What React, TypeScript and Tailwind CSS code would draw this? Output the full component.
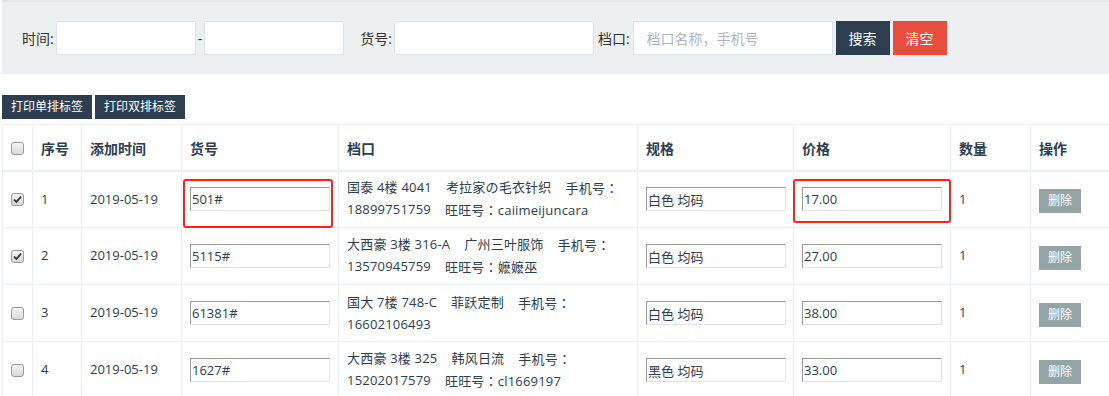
import React from 'react';

interface Row {
    id: number;
    date: string;
    sku: string;
    line1: string[];
    line2: string[];
    spec: string;
    price: string;
    qty: number;
    checked: boolean;
}

const rows: Row[] = [
    { id: 1, date: '2019-05-19', sku: '501#', line1: ['国泰 4楼 4041', '考拉家の毛衣针织', '手机号：'], line2: ['18899751759', '旺旺号：caiimeijuncara'], spec: '白色 均码', price: '17.00', qty: 1, checked: true },
    { id: 2, date: '2019-05-19', sku: '5115#', line1: ['大西豪 3楼 316-A', '广州三叶服饰', '手机号：'], line2: ['13570945759', '旺旺号：嬷嬷巫'], spec: '白色 均码', price: '27.00', qty: 1, checked: true },
    { id: 3, date: '2019-05-19', sku: '61381#', line1: ['国大 7楼 748-C', '菲跃定制', '手机号：'], line2: ['16602106493'], spec: '白色 均码', price: '38.00', qty: 1, checked: false },
    { id: 4, date: '2019-05-19', sku: '1627#', line1: ['大西豪 3楼 325', '韩风日流', '手机号：'], line2: ['15202017579', '旺旺号：cl1669197'], spec: '黑色 均码', price: '33.00', qty: 1, checked: false },
];

// full-width colon centred like the original font does
function Seg({ text }: { text: string }) {
    const parts = text.split('：');
    return (
        <span>
            {parts.map((p, i) => (
                <React.Fragment key={i}>
                    {p}
                    {i < parts.length - 1 && <span className="font-['Noto_Sans_CJK_JP']">：</span>}
                </React.Fragment>
            ))}
        </span>
    );
}

function Line({ segs }: { segs: string[] }) {
    return (
        <div className="flex gap-[14px] whitespace-nowrap tracking-[0.2px]">
            {segs.map((s, i) => <Seg key={i} text={s} />)}
        </div>
    );
}

function Check({ checked }: { checked: boolean }) {
    return (
        <span className="flex items-center justify-center w-[13px] h-[13px] rounded-[3px] border border-[#9a9a9a] bg-gradient-to-b from-[#f4f4f4] to-[#d9d9d9]">
            {checked && (
                <svg width="9" height="9" viewBox="0 0 9 9">
                    <path d="M1 4.6 L3.4 7 L8 1.6" fill="none" stroke="#333" strokeWidth="1.8" />
                </svg>
            )}
        </span>
    );
}

function CellInput({ value }: { value: string }) {
    return (
        <input
            readOnly
            defaultValue={value}
            className="block w-[140px] h-[24px] px-px text-[13px] text-[#2c3e50] bg-white border border-t-[#999] border-l-[#999] border-b-[#e3e3e3] border-r-[#e3e3e3] outline-none"
        />
    );
}

export default function App() {
    const th = 'border border-[#ecf0f1] border-b-2 px-2 pt-[2px] text-left align-middle font-bold text-[14px]';
    const td = 'border border-[#ecf0f1] px-2 align-middle';

    return (
        <div className="w-[1109px] h-[396px] overflow-hidden bg-white pl-[2px] font-['Open_Sans','Noto_Sans_CJK_SC',sans-serif] text-[#2c3e50]">
            {/* Search bar */}
            <div className="flex items-center h-[74px] pl-[20px] bg-[#ecf0f1] border-t-2 border-[#e2e6e8] text-[14px] text-[#333]">
                <span>时间:</span>
                <input readOnly className="ml-[2px] w-[140px] h-[34px] bg-white border border-[#dce4ec] outline-none" />
                <span className="mx-[2px]">-</span>
                <input readOnly className="w-[140px] h-[34px] bg-white border border-[#dce4ec] outline-none" />
                <span className="ml-[16px]">货号:</span>
                <input readOnly className="ml-[2px] w-[200px] h-[34px] bg-white border border-[#dce4ec] outline-none" />
                <span className="ml-[4px]">档口:</span>
                <input
                    readOnly
                    placeholder="档口名称，手机号"
                    className="ml-[3px] w-[200px] h-[34px] px-[13px] bg-white border border-[#dce4ec] outline-none text-[14px] placeholder:text-[#acb6bf]"
                />
                <button className="ml-[3px] w-[54px] h-[34px] bg-[#2c3e50] text-white">搜索</button>
                <button className="ml-[3px] w-[54px] h-[34px] bg-[#e74c3c] text-white">清空</button>
            </div>

            {/* Print buttons */}
            <div className="flex gap-[3px] mt-[21px]">
                <button className="w-[90px] h-[24px] bg-[#2c3e50] text-white text-[12px]">打印单排标签</button>
                <button className="w-[90px] h-[24px] bg-[#2c3e50] text-white text-[12px]">打印双排标签</button>
            </div>

            {/* Table */}
            <table className="mt-[5px] w-[1108px] table-fixed border-collapse text-[13px]">
                <colgroup>
                    <col className="w-[30px]" />
                    <col className="w-[49px]" />
                    <col className="w-[100px]" />
                    <col className="w-[157px]" />
                    <col className="w-[299px]" />
                    <col className="w-[156px]" />
                    <col className="w-[157px]" />
                    <col className="w-[80px]" />
                    <col />
                </colgroup>
                <thead>
                    <tr className="h-[46px]">
                        <th className={th}><Check checked={false} /></th>
                        <th className={th}>序号</th>
                        <th className={th}>添加时间</th>
                        <th className={th}>货号</th>
                        <th className={th}>档口</th>
                        <th className={th}>规格</th>
                        <th className={th}>价格</th>
                        <th className={th}>数量</th>
                        <th className={th}>操作</th>
                    </tr>
                </thead>
                <tbody>
                    {rows.map((row) => (
                        <tr key={row.id} className="h-[57px]">
                            <td className={td}><Check checked={row.checked} /></td>
                            <td className={td}>{row.id}</td>
                            <td className={td}>{row.date}</td>
                            <td className={`${td} relative`}>
                                <CellInput value={row.sku} />
                                {row.id === 1 && (
                                    <div className="absolute left-[1px] top-[7px] w-[150px] h-[49px] border-2 border-[#ff1f1f] rounded-[3px]" />
                                )}
                            </td>
                            <td className={`${td} leading-[21px]`}>
                                <Line segs={row.line1} />
                                <Line segs={row.line2} />
                            </td>
                            <td className={td}><CellInput value={row.spec} /></td>
                            <td className={`${td} relative`}>
                                <CellInput value={row.price} />
                                {row.id === 1 && (
                                    <div className="absolute left-[-1px] top-[7px] w-[158px] h-[44px] border-2 border-[#ff1f1f] rounded-[3px]" />
                                )}
                            </td>
                            <td className={td}>{row.qty}</td>
                            <td className={td}>
                                <button className="mt-[3px] w-[42px] h-[24px] bg-[#95a5a6] text-white text-[12px]">删除</button>
                            </td>
                        </tr>
                    ))}
                </tbody>
            </table>
        </div>
    );
}
